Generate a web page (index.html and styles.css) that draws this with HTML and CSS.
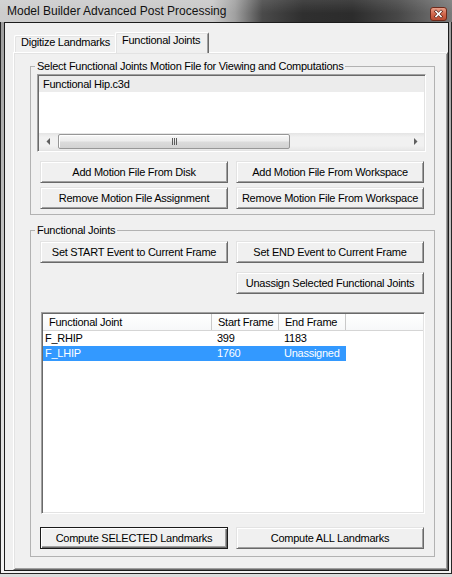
FILE: index.html
```html
<!DOCTYPE html>
<html>
<head>
<meta charset="utf-8">
<title>Model Builder Advanced Post Processing</title>
<link rel="stylesheet" href="styles.css">
</head>
<body>
<div class="window">
  <div class="titlebar">
    <span class="title">Model Builder Advanced Post Processing</span>
    <svg class="close" width="17" height="14" viewBox="0 0 17 14">
      <defs>
        <linearGradient id="cg" x1="0" y1="0" x2="0" y2="1">
          <stop offset="0" stop-color="#eaa590"/>
          <stop offset="0.5" stop-color="#d2674c"/>
          <stop offset="1" stop-color="#b9492f"/>
        </linearGradient>
      </defs>
      <rect x="0.5" y="0.5" width="16" height="13" rx="2.5" fill="url(#cg)" stroke="#6d2a1b"/>
      <path d="M6 4.5 L11 9.5 M11 4.5 L6 9.5" stroke="#5a2418" stroke-width="3" stroke-linecap="square"/>
      <path d="M6 4.5 L11 9.5 M11 4.5 L6 9.5" stroke="#ffffff" stroke-width="1.6" stroke-linecap="square"/>
    </svg>
  </div>
  <div class="frame">
    <div class="client">
      <div class="tabs">
        <div class="tab">Digitize Landmarks</div>
        <div class="tab active">Functional Joints</div>
      </div>
      <div class="panel">
        <fieldset class="group g1">
          <legend>Select Functional Joints Motion File for Viewing and Computations</legend>
          <div class="listbox">
            <div class="items">
              <div class="item sel">Functional Hip.c3d</div>
            </div>
            <div class="hscroll">
              <div class="arrow">
                <svg width="4" height="7" viewBox="0 0 4 7"><polygon points="4,0 4,7 0.5,3.5" fill="#5f5f5f"/></svg>
              </div>
              <div class="track">
                <div class="thumb">
                  <svg width="5" height="7" viewBox="0 0 5 7">
                    <rect x="0" y="0" width="1" height="7" fill="#5b5b5b"/>
                    <rect x="2" y="0" width="1" height="7" fill="#5b5b5b"/>
                    <rect x="4" y="0" width="1" height="7" fill="#5b5b5b"/>
                  </svg>
                </div>
              </div>
              <div class="arrow">
                <svg width="4" height="7" viewBox="0 0 4 7"><polygon points="0,0 0,7 3.5,3.5" fill="#5f5f5f"/></svg>
              </div>
            </div>
          </div>
          <div class="btn-grid">
            <button class="btn">Add Motion File From Disk</button>
            <button class="btn">Add Motion File From Workspace</button>
            <button class="btn">Remove Motion File Assignment</button>
            <button class="btn">Remove Motion File From Workspace</button>
          </div>
        </fieldset>

        <fieldset class="group g2">
          <legend>Functional Joints</legend>
          <div class="btn-grid events">
            <button class="btn">Set START Event to Current Frame</button>
            <button class="btn">Set END Event to Current Frame</button>
            <button class="btn second">Unassign Selected Functional Joints</button>
          </div>
          <div class="listview">
            <div class="lv-header">
              <div class="hcell c1">Functional Joint</div>
              <div class="hcell c2">Start Frame</div>
              <div class="hcell c3">End Frame</div>
            </div>
            <div class="lv-row">
              <div class="cell c1">F_RHIP</div>
              <div class="cell c2">399</div>
              <div class="cell c3">1183</div>
            </div>
            <div class="lv-row sel">
              <div class="cell c1">F_LHIP</div>
              <div class="cell c2">1760</div>
              <div class="cell c3">Unassigned</div>
            </div>
          </div>
          <div class="btn-grid compute">
            <button class="btn default">Compute SELECTED Landmarks</button>
            <button class="btn">Compute ALL Landmarks</button>
          </div>
        </fieldset>
      </div>
    </div>
  </div>
</div>
</body>
</html>
```
FILE: styles.css
```css
* { box-sizing: border-box; }

html, body {
  margin: 0;
  padding: 0;
}

body {
  width: 452px;
  height: 577px;
  overflow: hidden;
  background: #dcdcdc;
  font-family: "Liberation Sans", Arial, sans-serif;
  font-size: 11px;
  letter-spacing: -0.25px;
  color: #000;
}

.window {
  width: 452px;
  height: 574px;
  display: flex;
  flex-direction: column;
}

/* ---------- title bar ---------- */
.titlebar {
  height: 22px;
  flex: none;
  display: flex;
  justify-content: space-between;
  padding: 0 5px 0 7px;
  background:
    linear-gradient(to bottom, rgba(255,255,255,0.10), rgba(255,255,255,0) 60%),
    linear-gradient(to right, #cdcdcd 0%, #c8c8c8 47%, #a0a0a0 52%, #4a4a4a 58%, #2f2f2f 67%, #2c2c2c 78%, #474747 88%, #7a7a7a 100%);
}

.title {
  font-size: 12px;
  letter-spacing: 0;
  line-height: 22px;
  color: #111;
}

.close {
  margin-top: 7px;
  flex: none;
}

/* ---------- window frame ---------- */
.frame {
  flex: 1;
  display: flex;
  border: 1px solid #262626;
  border-top: 0;
  padding: 0 2px 2px 3px;
  background: linear-gradient(to bottom, #9c9c9c, #c8c8c8 45%, #f2f2f2);
}

.client {
  flex: 1;
  display: flex;
  flex-direction: column;
  background: #f0f0f0;
  border: 1px solid #1c1c1c;
  padding: 9px 0 0 8px;
}

/* ---------- tabs ---------- */
.tabs {
  position: relative;
  z-index: 1;
  flex: none;
  height: 20px;
  display: flex;
  align-items: flex-end;
  padding-left: 1px;
}

.tab {
  height: 17px;
  width: 101px;
  padding: 0 0 0 6px;
  line-height: 13px;
  background: #f0f0f0;
  border-top: 1px solid #ffffff;
  border-left: 1px solid #ffffff;
  border-radius: 2px 2px 0 0;
  box-shadow: inset 1px 1px 0 #e3e3e3;
  white-space: nowrap;
}

.tab.active {
  height: 21px;
  width: 94px;
  margin-bottom: -1px;
  padding-top: 1px;
  border-right: 1px solid #696969;
  box-shadow: inset 1px 1px 0 #e3e3e3, inset -1px 0 0 #a0a0a0;
}

.panel {
  flex: 1;
  display: flex;
  flex-direction: column;
  background: #f0f0f0;
  border: 1px solid;
  border-color: #ffffff #696969 #696969 #ffffff;
  box-shadow: inset 1px 1px 0 #e3e3e3, inset -1px -1px 0 #a0a0a0;
}

/* ---------- group boxes ---------- */
.group {
  margin: 0 12px 0 16px;
  padding: 0;
  min-width: 0;
  border: 1px solid #b2b2b2;
}

.group legend {
  margin-left: 4px;
  padding: 0 2px;
  line-height: 13px;
  white-space: nowrap;
}

.g1 {
  margin-top: 7px;
  padding-bottom: 5px;
}

.g2 {
  margin-top: 9px;
  padding-bottom: 7px;
}

/* ---------- list box ---------- */
.listbox {
  margin: 1px 0 0 6px;
  width: 389px;
  height: 78px;
  display: flex;
  flex-direction: column;
  background: #ffffff;
  border: 1px solid;
  border-color: #a0a0a0 #ffffff #ffffff #a0a0a0;
  box-shadow: inset 1px 1px 0 #696969, inset -1px -1px 0 #e3e3e3;
  padding: 1px;
}

.items {
  flex: 1;
}

.item {
  height: 16px;
  line-height: 16px;
  padding-left: 4px;
}

.item.sel {
  background: #ececec;
}

.hscroll {
  flex: none;
  height: 17px;
  display: flex;
  background: linear-gradient(to bottom, #e4e4e4, #f1f1f1 25%, #f1f1f1 75%, #e8e8e8);
}

.arrow {
  width: 17px;
  flex: none;
  display: flex;
  align-items: center;
  justify-content: center;
}

.track {
  flex: 1;
  display: flex;
  align-items: center;
}

.thumb {
  margin-left: 2px;
  width: 232px;
  height: 15px;
  display: flex;
  align-items: center;
  justify-content: center;
  border: 1px solid #979797;
  border-radius: 2px;
  background: linear-gradient(to bottom, #f7f7f7, #ececec 48%, #dcdcdc 52%, #d2d2d2);
  box-shadow: inset 1px 1px 0 #ffffff;
}

/* ---------- buttons ---------- */
.btn-grid {
  display: grid;
  grid-template-columns: 188px 188px;
  column-gap: 8px;
  margin-left: 9px;
}

.g1 .btn-grid {
  margin-top: 9px;
  row-gap: 4px;
}

.btn-grid.events {
  margin-top: 4px;
  row-gap: 9px;
}

.btn-grid.compute {
  margin-top: 13px;
}

.btn {
  height: 22px;
  margin: 0;
  padding: 0;
  font: inherit;
  letter-spacing: inherit;
  color: #000;
  background: #f0f0f0;
  border: 1px solid;
  border-color: #e3e3e3 #696969 #696969 #e3e3e3;
  box-shadow: inset 1px 1px 0 #ffffff, inset -1px -1px 0 #a0a0a0;
  text-align: center;
  white-space: nowrap;
}

.btn.second {
  grid-column: 2;
}

.btn.default {
  border-color: #1a1a1a;
  box-shadow: inset 1px 1px 0 #ffffff, inset -1px -1px 0 #696969, inset -2px -2px 0 #a0a0a0;
}

/* ---------- list view ---------- */
.listview {
  margin: 18px 0 0 10px;
  width: 384px;
  height: 202px;
  background: #ffffff;
  border: 1px solid;
  border-color: #a0a0a0 #ffffff #ffffff #a0a0a0;
  box-shadow: inset 1px 1px 0 #696969, inset -1px -1px 0 #e3e3e3;
  padding: 1px;
}

.lv-header {
  display: flex;
  height: 17px;
  border-bottom: 1px solid #d5d5d5;
  background: linear-gradient(to bottom, #ffffff, #f7f8f9);
}

.hcell {
  line-height: 16px;
  padding-left: 6px;
  border-right: 1px solid #c9c9c9;
  white-space: nowrap;
}

.c1 { width: 169px; }
.c2 { width: 67px; }
.c3 { width: 67px; }

.lv-row {
  display: flex;
  width: 303px;
  height: 15px;
  line-height: 15px;
}

.cell {
  white-space: nowrap;
  padding-left: 5px;
}

.cell.c1 {
  padding-left: 2px;
}

.lv-row.sel {
  background: #3399ff;
  color: #ffffff;
}
```
